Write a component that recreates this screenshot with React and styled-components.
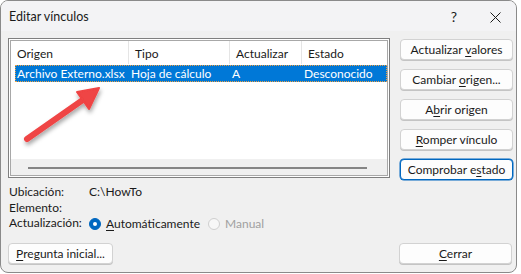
import styled, { createGlobalStyle } from "styled-components"

const Global = createGlobalStyle`
    html, body {
        margin: 0;
        padding: 0;
        background: #ffffff;
    }
    body {
        font-family: Lato, "Noto Sans", sans-serif;
        font-size: 12px;
        color: #1a1a1a;
    }
`

const cols = "114px 101px 72px 1fr"

function App() {
    return (<>
        <Global />
        <Window>
            <TitleBar>
                <Title>Editar vínculos</Title>
                <Help>?</Help>
                <Close>
                    <svg width="11" height="11" viewBox="0 0 11 11">
                        <path d="M0.5 0.5 L10.5 10.5 M10.5 0.5 L0.5 10.5" stroke="#1a1a1a" strokeWidth="1" />
                    </svg>
                </Close>
            </TitleBar>
            <Body>
                <Top>
                    <ListBox>
                        <HeaderRow>
                            <HeadCell>Origen</HeadCell>
                            <HeadCell>Tipo</HeadCell>
                            <HeadCell>Actualizar</HeadCell>
                            <HeadCell $last>Estado</HeadCell>
                        </HeaderRow>
                        <SelRow>
                            <Cell>Archivo Externo.xlsx</Cell>
                            <Cell>Hoja de cálculo</Cell>
                            <Cell>A</Cell>
                            <Cell>Desconocido</Cell>
                        </SelRow>
                        <Empty />
                        <ScrollBar><Thumb /></ScrollBar>
                        <Arrow width="100" height="70" viewBox="0 0 100 70">
                            <defs>
                                <filter id="sh" x="-30%" y="-30%" width="160%" height="160%">
                                    <feDropShadow dx="1" dy="3" stdDeviation="2" floodColor="#000" floodOpacity="0.35" />
                                </filter>
                            </defs>
                            <g filter="url(#sh)">
                                <path d="M12 60 L72 18" stroke="#ef4444" strokeWidth="6" strokeLinecap="round" />
                                <path d="M84 9 L62 13 L74 30 Z" fill="#ef4444" stroke="#ef4444" strokeWidth="2" strokeLinejoin="round" />
                            </g>
                        </Arrow>
                    </ListBox>
                    <Buttons>
                        <Button><span>Actualizar <u>v</u>alores</span></Button>
                        <Button><span>Cambiar <u>o</u>rigen...</span></Button>
                        <Button><span>A<u>b</u>rir origen</span></Button>
                        <Button><span><u>R</u>omper vínculo</span></Button>
                        <Button $focus><span>Comprobar e<u>s</u>tado</span></Button>
                    </Buttons>
                </Top>
                <Info>
                    <Label>Ubicación:</Label>
                    <Value>C:\HowTo</Value>
                    <Label>Elemento:</Label>
                    <Value />
                    <Label>Actualización:</Label>
                    <Radios>
                        <Radio>
                            <Dot $on />
                            <span><u>A</u>utomáticamente</span>
                        </Radio>
                        <Radio $disabled>
                            <Dot />
                            <span>Manual</span>
                        </Radio>
                    </Radios>
                </Info>
                <Bottom>
                    <Button $w="105px"><span><u>P</u>regunta inicial...</span></Button>
                    <Button><span><u>C</u>errar</span></Button>
                </Bottom>
            </Body>
        </Window>
    </>)
}

const Window = styled.div`
    box-sizing: border-box;
    width: 517px;
    height: 273px;
    border: 1px solid #8a8a8a;
    border-radius: 8px;
    background: #f0f0f0;
    overflow: hidden;
    display: flex;
    flex-direction: column;
`

const TitleBar = styled.div`
    height: 30px;
    flex: none;
    display: flex;
    align-items: center;
    background: #f3f3f5;
    padding-left: 8px;
    padding-right: 1px;
`

const Title = styled.div`
    flex: 1;
    font-size: 12.5px;
    padding-top: 1px;
`

const Help = styled.div`
    width: 42px;
    text-align: center;
    font-size: 14px;
`

const Close = styled.div`
    width: 40px;
    display: flex;
    justify-content: center;
    padding-top: 2px;
`

const Body = styled.div`
    flex: 1;
    display: flex;
    flex-direction: column;
    padding: 7px 3px 8px 7px;
`

const Top = styled.div`
    display: flex;
    gap: 10px;
    align-items: flex-start;
`

const ListBox = styled.div`
    position: relative;
    box-sizing: border-box;
    width: 382px;
    height: 140px;
    background: #ffffff;
    border: 1px solid #7f7f7f;
    box-shadow: inset 0 0 0 1px #ffffff, inset 0 0 0 2px #a8a8a8;
    padding: 2px 2px 2px 2px;
    display: flex;
    flex-direction: column;
`

const HeaderRow = styled.div`
    display: grid;
    grid-template-columns: 118px 101px 72px 1fr;
    height: 23px;
    flex: none;
`

const HeadCell = styled.div`
    display: flex;
    align-items: center;
    padding: 1px 0 0 6px;
    border-right: ${p => p.$last ? "none" : "1px solid #e5e5e5"};
`

const SelRow = styled.div`
    display: grid;
    grid-template-columns: ${cols};
    height: 17px;
    margin: 1px 0 0 4px;
    background: #0078d7;
    color: #ffffff;
    outline: 1px dotted #f0a040;
    outline-offset: -1px;
`

const Cell = styled.div`
    display: flex;
    align-items: center;
    padding-left: 2px;
    white-space: nowrap;
`

const Empty = styled.div`
    flex: 1;
`

const ScrollBar = styled.div`
    height: 15px;
    flex: none;
    background: #f0f0f0;
    display: flex;
    align-items: center;
    padding: 1px 20px 0 17px;
`

const Thumb = styled.div`
    flex: 1;
    height: 2px;
    background: #858585;
`

const Arrow = styled.svg`
    position: absolute;
    left: 6px;
    top: 40px;
`

const Buttons = styled.div`
    display: flex;
    flex-direction: column;
    gap: 9px;
    padding-top: 1px;
`

const Button = styled.div`
    box-sizing: border-box;
    width: ${p => p.$w || "113px"};
    height: 21px;
    display: flex;
    align-items: center;
    justify-content: center;
    background: #fdfdfd;
    border: 1px solid ${p => p.$focus ? "#0067c0" : "#d2d2d2"};
    box-shadow: ${p => p.$focus ? "0 0 0 0.5px #0067c0" : "0 1px 0 #c4c4c4"};
    border-radius: 4px;
    white-space: nowrap;
    u {
        text-underline-offset: 2px;
    }
`

const Info = styled.div`
    display: grid;
    grid-template-columns: 80px 1fr;
    grid-auto-rows: 16px;
    align-items: center;
    margin-top: 3px;
    padding-left: 1px;
    > :nth-child(5), > :nth-child(6) {
        height: 18px;
        margin-top: 1px;
    }
`

const Label = styled.div``

const Value = styled.div``

const Radios = styled.div`
    display: flex;
    align-items: center;
    gap: 8px;
`

const Radio = styled.div`
    display: flex;
    align-items: center;
    gap: 5px;
    color: ${p => p.$disabled ? "#a0a0a0" : "#1a1a1a"};
    u {
        text-underline-offset: 2px;
    }
`

const Dot = styled.span`
    box-sizing: border-box;
    width: 12px;
    height: 12px;
    border-radius: 50%;
    background: ${p => p.$on ? "#0067c0" : "#f7f7f7"};
    border: 1px solid ${p => p.$on ? "#0067c0" : "#cfcfcf"};
    display: flex;
    align-items: center;
    justify-content: center;
    &::after {
        content: "";
        display: ${p => p.$on ? "block" : "none"};
        width: 4px;
        height: 4px;
        border-radius: 50%;
        background: #ffffff;
    }
`

const Bottom = styled.div`
    margin-top: auto;
    display: flex;
    justify-content: space-between;
    padding-right: 1px;
`

export default App
